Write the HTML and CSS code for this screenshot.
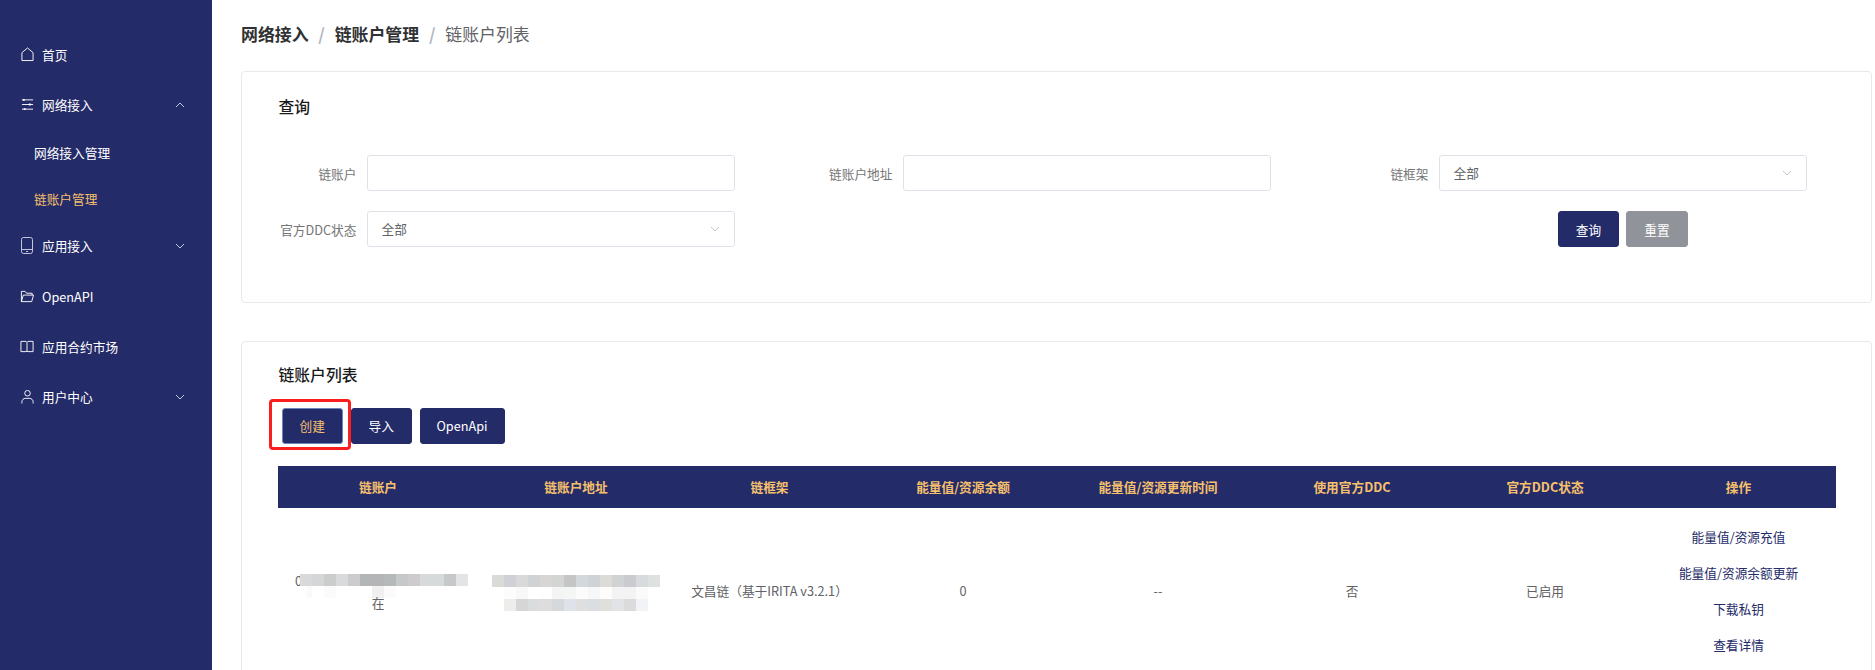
FILE: index.html
```html
<!DOCTYPE html>
<html lang="zh-CN">

<head>
    <meta charset="UTF-8">
    <meta name="viewport" content="width=device-width, initial-scale=1.0">
    <link rel="stylesheet" href="styles.css">
    <title>链账户列表</title>
</head>

<body>
    <div class="layout">
        <aside class="side">
            <a class="side-item" href="#">
                <svg class="side-icon" viewBox="0 0 14 16"><path d="M1 14.500V6L7 1l6 5v8.500z" /></svg>
                <span>首页</span>
            </a>
            <a class="side-item" href="#">
                <svg class="side-icon" viewBox="0 0 14 16">
                    <path d="M1 3h12M1 8h12M1 13h12" />
                    <path class="knob" d="M3 2v2M9.500 7v2M4 12v2" />
                </svg>
                <span>网络接入</span>
                <svg class="side-arrow" viewBox="0 0 10 6"><path d="M1 5l4-4 4 4" /></svg>
            </a>
            <a class="side-sub" href="#">网络接入管理</a>
            <a class="side-sub active" href="#">链账户管理</a>
            <a class="side-item" href="#">
                <svg class="side-icon tall dim" viewBox="0 0 12 17">
                    <rect x="0.500" y="0.500" width="11" height="16" rx="2" />
                    <path d="M0.500 12.500h11M5 14.500h2" />
                </svg>
                <span>应用接入</span>
                <svg class="side-arrow" viewBox="0 0 10 6"><path d="M1 1l4 4 4-4" /></svg>
            </a>
            <a class="side-item" href="#">
                <svg class="side-icon wide" viewBox="0 0 15 13"><path d="M1.500 12V1h4l1.500 2h6v2M1.500 12l2-7h11l-2 7z" /></svg>
                <span>OpenAPI</span>
            </a>
            <a class="side-item" href="#">
                <svg class="side-icon wide" viewBox="0 0 15 13"><path d="M1 1h5.500l1 1 1-1H14v11H8.500l-1-.5-1 .5H1zM7.500 2v10" /></svg>
                <span>应用合约市场</span>
            </a>
            <a class="side-item" href="#">
                <svg class="side-icon" viewBox="0 0 14 16">
                    <circle cx="7" cy="4.500" r="3" />
                    <path d="M1 15.500v-2c0-2 2-3.500 3.500-3.500h5c1.500 0 3.500 1.500 3.500 3.500v2" />
                </svg>
                <span>用户中心</span>
                <svg class="side-arrow" viewBox="0 0 10 6"><path d="M1 1l4 4 4-4" /></svg>
            </a>
        </aside>

        <main class="main">
            <div class="crumb">
                <b>网络接入</b><i>/</i><b>链账户管理</b><i>/</i><span>链账户列表</span>
            </div>

            <section class="card card-query">
                <h2 class="card-title">查询</h2>
                <div class="query-form">
                    <label class="field">
                        <span class="field-label">链账户</span>
                        <input class="field-box" type="text">
                    </label>
                    <label class="field">
                        <span class="field-label">链账户地址</span>
                        <input class="field-box" type="text">
                    </label>
                    <div class="field">
                        <span class="field-label">链框架</span>
                        <div class="field-box select">全部
                            <svg class="select-arrow" viewBox="0 0 10 6"><path d="M1 1l4 4 4-4" /></svg>
                        </div>
                    </div>
                    <div class="field">
                        <span class="field-label">官方DDC状态</span>
                        <div class="field-box select">全部
                            <svg class="select-arrow" viewBox="0 0 10 6"><path d="M1 1l4 4 4-4" /></svg>
                        </div>
                    </div>
                    <div class="query-btns">
                        <button class="btn" type="button">查询</button>
                        <button class="btn btn-gray" type="button">重置</button>
                    </div>
                </div>
            </section>

            <section class="card card-list">
                <h2 class="card-title">链账户列表</h2>
                <div class="list-btns">
                    <button class="btn btn-focus" type="button">创建</button>
                    <button class="btn" type="button">导入</button>
                    <button class="btn btn-api" type="button">OpenApi</button>
                </div>
                <table class="list">
                    <thead>
                        <tr>
                            <th>链账户</th>
                            <th>链账户地址</th>
                            <th>链框架</th>
                            <th>能量值/资源余额</th>
                            <th>能量值/资源更新时间</th>
                            <th>使用官方DDC</th>
                            <th>官方DDC状态</th>
                            <th>操作</th>
                        </tr>
                    </thead>
                    <tbody>
                        <tr>
                            <td>
                                <div class="account">
                                    <div class="account-line"><span class="sliver">0</span><div class="blur blur-a"></div></div>
                                    <div class="blur blur-b"></div>
                                    <div class="account-end">在</div>
                                </div>
                            </td>
                            <td>
                                <div class="address">
                                    <div class="blur blur-c"></div>
                                    <div class="blur blur-d"></div>
                                    <div class="blur blur-e"></div>
                                </div>
                            </td>
                            <td>文昌链（基于IRITA v3.2.1）</td>
                            <td>0</td>
                            <td>--</td>
                            <td>否</td>
                            <td>已启用</td>
                            <td>
                                <div class="ops">
                                    <a href="#">能量值/资源充值</a>
                                    <a href="#">能量值/资源余额更新</a>
                                    <a href="#">下载私钥</a>
                                    <a href="#">查看详情</a>
                                </div>
                            </td>
                        </tr>
                    </tbody>
                </table>
            </section>
        </main>
    </div>
</body>

</html>
```

FILE: styles.css
```css
* {
    box-sizing: border-box;
}

html,
body {
    height: 670px;
    margin: 0;
    overflow: hidden;
}

body {
    background: #FFFFFF;
    font-family: "Noto Sans CJK SC", "Open Sans", sans-serif;
    font-size: 12.7px;
    color: #606266;
}

a {
    text-decoration: none;
}

.layout {
    display: flex;
    height: 670px;
}

/* sidebar */
.side {
    flex: 0 0 212px;
    padding-top: 29.500px;
    background: #242B69;
}

.side-item,
.side-sub {
    display: flex;
    align-items: center;
    color: #FFFFFF;
}

.side-item {
    position: relative;
    height: 50.2px;
    padding-left: 21px;
}

.side-item span {
    margin-left: 8px;
}

.side-sub {
    height: 45.500px;
    padding-left: 34px;
}

.side-sub.active {
    color: #F6C06C;
}

.side-icon {
    flex: none;
    width: 13px;
    height: 15px;
    fill: none;
    stroke: #FFFFFF;
    stroke-width: 1;
}

.side-icon.dim {
    stroke: #C4C7DA;
}

.side-icon.tall {
    width: 12px;
    height: 17px;
}

.side-icon.tall + span {
    margin-left: 9px;
}

.side-icon.wide {
    width: 14px;
    height: 13px;
    margin-left: -1px;
}

.side-icon .knob {
    stroke-width: 2;
}

.side-arrow {
    position: absolute;
    top: 50%;
    left: 175px;
    width: 10px;
    height: 6px;
    margin-top: -3px;
    fill: none;
    stroke: #C4C7DA;
    stroke-width: 1;
}

/* main column */
.main {
    flex: 1;
    min-width: 0;
    padding: 0 3px 0 29px;
}

.crumb {
    display: flex;
    align-items: center;
    height: 71px;
    padding-bottom: 5px;
    font-size: 16.900px;
    color: #606266;
}

.crumb b {
    font-weight: 700;
    color: #303133;
}

.crumb i {
    margin: 0 9.800px;
    font-style: normal;
    font-weight: 700;
    color: #B4B8C2;
}

.card {
    padding: 0 36.500px;
    background: #FFFFFF;
    border: 1px solid #E8E9EE;
    border-radius: 4px;
}

.card-query {
    height: 232px;
    margin-bottom: 37.500px;
    padding-top: 24px;
}

.card-list {
    height: 400px;
    padding-top: 22px;
}

.card-title {
    margin: 0;
    font-size: 15.800px;
    line-height: 22px;
    font-weight: 500;
    color: #1A1A1A;
}

.query-form {
    display: grid;
    grid-template-columns: repeat(3, 456px);
    gap: 20px 80px;
    margin-top: 37px;
}

.field {
    display: flex;
    align-items: center;
}

.field-label {
    flex: 0 0 78px;
    white-space: nowrap;
    text-align: right;
    direction: rtl;
    unicode-bidi: plaintext;
    color: #757575;
}

.field-box {
    flex: 0 0 367.500px;
    height: 36px;
    margin-left: 10.500px;
    padding: 0 13.500px;
    background: #FFFFFF;
    border: 1px solid #E0E1E8;
    border-radius: 3px;
    outline: 0;
    font: inherit;
    color: #606266;
}

.select {
    position: relative;
    line-height: 34px;
}

.select-arrow {
    position: absolute;
    top: 50%;
    right: 14px;
    width: 10px;
    height: 6px;
    margin-top: -3px;
    fill: none;
    stroke: #C0C4CC;
    stroke-width: 1;
}

.query-btns {
    grid-column: 3;
    display: flex;
    justify-content: center;
    gap: 7px;
    padding-left: 88.500px;
}

.btn {
    width: 61.500px;
    height: 36px;
    padding: 0;
    background: #242B69;
    border: 1px solid #242B69;
    border-radius: 3px;
    font: inherit;
    color: #FFFFFF;
}

.btn-gray {
    background: #909399;
    border-color: #909399;
}

.btn-api {
    width: 85px;
}

.btn-focus {
    position: relative;
    border-color: #6C86BC;
    color: #F6C06C;
}

/* red mark around the create button */
.btn-focus::after {
    content: "";
    position: absolute;
    top: -10px;
    right: -9px;
    bottom: -7px;
    left: -14px;
    border: 3px solid #FA1E1E;
    border-radius: 4px;
}

.list-btns {
    display: flex;
    gap: 7.500px;
    margin: 22px 0 22px 3px;
}

.list {
    width: 1558px;
    margin-left: -0.500px;
    table-layout: fixed;
    border-collapse: collapse;
}

.list th {
    height: 42px;
    padding: 0;
    background: #242B69;
    font-weight: 700;
    color: #F6C06C;
}

.list th:nth-child(1) { width: 200px; }
.list th:nth-child(2) { width: 196px; }
.list th:nth-child(3) { width: 191px; }
.list th:nth-child(4) { width: 196px; }
.list th:nth-child(5) { width: 194px; }
.list th:nth-child(6) { width: 194px; }
.list th:nth-child(7) { width: 192px; }
.list th:nth-child(8) { width: 195px; }

.list td {
    height: 166px;
    padding: 0;
    text-align: center;
    vertical-align: middle;
    white-space: nowrap;
}

.account,
.address {
    display: flex;
    flex-direction: column;
    align-items: center;
    padding-top: 4px;
}

.account-line {
    display: flex;
    margin-left: 7px;
}

/* first char of the address, the blur covers most of it */
.sliver {
    width: 8px;
    height: 12px;
    line-height: 14px;
    text-align: left;
}

.account-line .blur {
    position: relative;
    margin-left: -3px;
}

.account-end {
    line-height: 16px;
    margin-top: -3px;
}

.blur {
    height: 12px;
}

.blur-a {
    width: 168px;
    background: linear-gradient(90deg, #D9D9D9 0 12px, #D5D6D7 0 24px, #CBCDCD 0 36px, #D8DADB 0 48px, #CDCCCD 0 60px, #B2B6B7 0 72px, #B4B5B7 0 84px, #B6B9BA 0 96px, #C6C8CA 0 108px, #CDCBCC 0 120px, #D6DADB 0 144px, #C6C8CA 0 156px, #E2E4E5 0 168px);
}

.blur-b {
    width: 168px;
    margin-left: 12px;
    background: linear-gradient(90deg, #FFFFFF 0 6px, #FAFAFA 0 12px, #FFFFFF 0 24px, #FBFBFB 0 36px, #FFFFFF 0 72px, #F0F0F0 0 84px, #FBFBFB 0 96px, #FFFFFF 0 168px);
}

.blur-c {
    width: 168px;
    background: linear-gradient(90deg, #DADAD8 0 12px, #CFD1D6 0 24px, #D8D9D8 0 36px, #D0D3D6 0 48px, #D8D6D4 0 60px, #D2D5D4 0 72px, #C6C5C6 0 84px, #D3D8DC 0 96px, #D0D3D6 0 108px, #DCDBD8 0 120px, #D0D2D4 0 132px, #C9CBCE 0 144px, #D8DBDE 0 156px, #DFE1E0 0 168px);
}

.blur-d {
    width: 144px;
    background: linear-gradient(90deg, #FCFCFC 0 12px, #F8F8F8 0 24px, #FFFFFF 0 36px, #FEFEFE 0 48px, #F4F4F4 0 60px, #F4F6F6 0 72px, #FBFBFB 0 84px, #F6F7F7 0 96px, #FFFDFB 0 108px, #F3F3F4 0 132px, #FAFAFA 0 144px);
}

.blur-e {
    width: 144px;
    background: linear-gradient(90deg, #EDEDEB 0 12px, #D6D6D6 0 24px, #DADCDE 0 36px, #DEDCDC 0 48px, #D6D9DC 0 60px, #DFE2E8 0 72px, #DFDFDF 0 84px, #DBDEE0 0 96px, #DFDFDC 0 108px, #E1E3E7 0 120px, #DBDBDB 0 132px, #F2F3F7 0 144px);
}

.ops {
    display: flex;
    flex-direction: column;
    gap: 18px;
    line-height: 18px;
}

.ops a {
    color: #242B69;
}
```
